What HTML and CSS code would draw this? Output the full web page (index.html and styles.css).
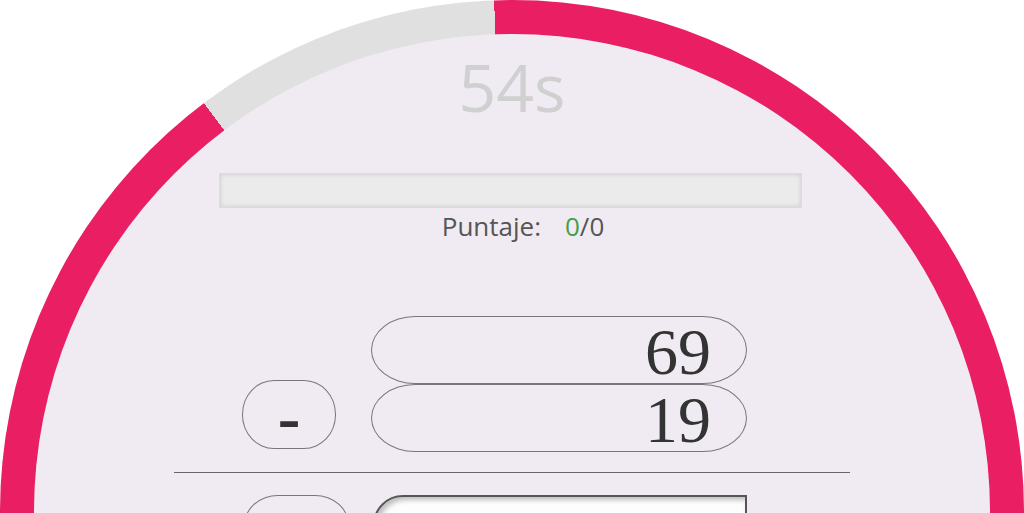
FILE: index.html
```html
<!DOCTYPE html>
<html lang="es">
<head>
<meta charset="utf-8">
<title>Resta</title>
<link rel="stylesheet" href="styles.css">
</head>
<body>
<div class="viewport">
  <div class="timer">
    <div class="face">
      <div class="time">54s</div>
      <div class="bar"></div>
      <div class="score"><span class="label">Puntaje:</span><span class="val"><span class="ok">0</span>/0</span></div>
      <div class="problem">
        <div class="op-grid">
          <div class="field top">69</div>
          <div class="opbtn">-</div>
          <div class="field">19</div>
        </div>
        <div class="rule"></div>
        <div class="answer-row">
          <div class="eqbtn"></div>
          <div class="answer"></div>
        </div>
      </div>
    </div>
  </div>
</div>
</body>
</html>
```
FILE: styles.css
```css
html, body {
  margin: 0;
  padding: 0;
  overflow: hidden;
  background: #ffffff;
}
.viewport {
  width: 1024px;
  height: 513px;
  overflow: hidden;
}
.timer {
  width: 1024px;
  height: 1024px;
  box-sizing: border-box;
  padding: 34px;
  border-radius: 50%;
  background: conic-gradient(#e91e63 0deg 323deg, #e0e0e0 323deg 358deg, #e91e63 358deg 360deg);
}
.face {
  width: 100%;
  height: 100%;
  border-radius: 50%;
  background: #f0ebf2;
  display: flex;
  flex-direction: column;
  align-items: center;
  font-family: "Open Sans", "DejaVu Sans", sans-serif;
}
.time {
  margin-top: 19px;
  font-size: 66px;
  line-height: 66px;
  height: 66px;
  color: #d0d0d0;
}
.bar {
  margin-top: 54px;
  margin-right: 3px;
  width: 583px;
  height: 35px;
  box-sizing: border-box;
  border: 1px solid #dcdcdc;
  background: #ebebeb;
  box-shadow: inset 0 0 5px rgba(0, 0, 0, 0.14);
}
.score {
  margin-top: 1px;
  margin-left: 22px;
  display: flex;
  gap: 24px;
  font-size: 26px;
  line-height: 35px;
  color: #555555;
}
.ok {
  color: #43a047;
}
.problem {
  margin-top: 72px;
  width: 676px;
}
.op-grid {
  display: grid;
  grid-template-columns: 94px 376px;
  column-gap: 35px;
  padding-left: 68px;
}
.field {
  grid-column: 2;
  height: 68px;
  box-sizing: border-box;
  border: 1px solid #777777;
  border-radius: 44px / 34px;
  padding: 4px 35px 0 0;
  text-align: right;
  font-family: "Liberation Serif", "Times New Roman", serif;
  font-size: 66px;
  line-height: 62px;
  color: #333333;
}
.opbtn {
  grid-column: 1;
  grid-row: 2;
  align-self: start;
  margin-top: -4px;
  height: 69px;
  box-sizing: border-box;
  border: 1px solid #777777;
  border-radius: 32px / 34px;
  padding-top: 6px;
  text-align: center;
  font-family: "Liberation Serif", "Times New Roman", serif;
  font-weight: bold;
  font-size: 68px;
  line-height: 61px;
  color: #333333;
}
.rule {
  margin-top: 20px;
  border-top: 1px solid #666666;
}
.answer-row {
  margin-top: 22px;
  padding-left: 70px;
  display: flex;
  gap: 24px;
}
.eqbtn {
  width: 105px;
  height: 69px;
  box-sizing: border-box;
  border: 1px solid #777777;
  border-radius: 34px / 30px;
}
.answer {
  width: 374px;
  height: 69px;
  box-sizing: border-box;
  border: 2px solid #555555;
  border-top-left-radius: 30px;
  background: #fdfdfd;
  box-shadow: inset 3px 3px 5px rgba(0, 0, 0, 0.25);
}
```
